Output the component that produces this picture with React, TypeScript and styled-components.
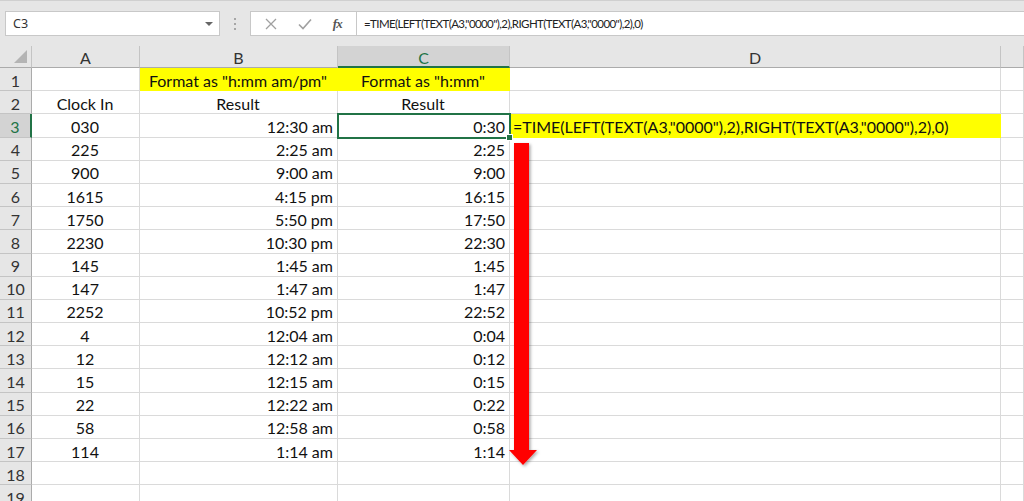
import React from 'react';
import styled, { createGlobalStyle, css } from 'styled-components';

const GlobalStyle = createGlobalStyle`
  html, body {
    margin: 0;
    padding: 0;
    background: #ffffff;
    overflow: hidden;
  }
  body {
    font-family: Lato, "Liberation Sans", sans-serif;
  }
`;

const GREEN = '#217346';
const GRID = '#dadada';
const HEAD_LINE = '#c4c4c4';

const Page = styled.div`
  width: 1024px;
  height: 501px;
  overflow: hidden;
  background: #ffffff;
`;

const TopBar = styled.div`
  height: 46px;
  box-sizing: border-box;
  padding-top: 10px;
  background: #e6e6e6;
  border-top: 1px solid #d0d0d0;
  display: flex;
  align-items: flex-start;
`;

const NameBox = styled.div`
  margin-left: 5px;
  width: 215px;
  height: 25px;
  box-sizing: border-box;
  background: #fff;
  border: 1px solid #c8c8c8;
  display: flex;
  align-items: center;
  justify-content: space-between;
  padding: 0 6px 0 7px;
  font-family: "Noto Sans", "Liberation Sans", sans-serif;
  font-size: 12.5px;
  color: #333;
`;

const Caret = styled.span`
  width: 0;
  height: 0;
  border-left: 4px solid transparent;
  border-right: 4px solid transparent;
  border-top: 4px solid #666;
`;

const Grip = styled.div`
  width: 30px;
  height: 25px;
  display: flex;
  flex-direction: column;
  align-items: center;
  justify-content: center;
  gap: 3px;

  span {
    width: 2px;
    height: 2px;
    background: #a6a6a6;
  }
`;

const ButtonBox = styled.div`
  width: 106px;
  height: 25px;
  box-sizing: border-box;
  background: #fff;
  border: 1px solid #c8c8c8;
  border-right: none;
  display: flex;
  align-items: center;
  justify-content: space-around;
  padding: 0 4px;
`;

const Fx = styled.span`
  font-family: "Liberation Serif", serif;
  font-style: italic;
  font-weight: bold;
  font-size: 13px;
  color: #555;
  letter-spacing: -1px;
`;

const FormulaInput = styled.div`
  flex: 1;
  height: 25px;
  box-sizing: border-box;
  background: #fff;
  border: 1px solid #c8c8c8;
  border-right: none;
  display: flex;
  align-items: center;
  padding-left: 7px;
  font-family: Lato, "Liberation Sans", sans-serif;
  font-size: 11.5px;
  letter-spacing: -0.6px;
  color: #222;
  white-space: nowrap;
`;

const SheetWrap = styled.div`
  position: relative;
`;

const Sheet = styled.div`
  display: grid;
  grid-template-columns: 32px 108px 198px 172px 491px 1fr;
  grid-template-rows: 22px;
  grid-auto-rows: 23.2px;
`;

type Align = 'left' | 'center' | 'right';

const HeadCell = styled.div<{ $active?: boolean }>`
  background: ${p => (p.$active ? '#d3d3d3' : '#e6e6e6')};
  color: ${p => (p.$active ? GREEN : '#333')};
  border-right: 1px solid ${HEAD_LINE};
  border-bottom: ${p => (p.$active ? `2px solid ${GREEN}` : `1px solid #ababab`)};
  box-sizing: border-box;
  display: flex;
  align-items: center;
  justify-content: center;
  font-size: 16px;
  padding-top: 2px;
`;

const Corner = styled.div`
  background: #e6e6e6;
  border-right: 1px solid ${HEAD_LINE};
  border-bottom: 1px solid #ababab;
  box-sizing: border-box;
  display: flex;
  align-items: flex-end;
  justify-content: flex-end;
  padding: 0 4px 4px 0;

  &::after {
    content: '';
    width: 0;
    height: 0;
    border-left: 13px solid transparent;
    border-bottom: 13px solid #b4b4b4;
  }
`;

const RowHead = styled.div<{ $active?: boolean }>`
  background: ${p => (p.$active ? '#d3d3d3' : '#e6e6e6')};
  color: ${p => (p.$active ? GREEN : '#333')};
  border-right: ${p => (p.$active ? `2px solid ${GREEN}` : `1px solid #ababab`)};
  border-bottom: 1px solid ${HEAD_LINE};
  box-sizing: border-box;
  display: flex;
  align-items: center;
  justify-content: center;
  font-size: 16px;
  padding-top: 2px;
`;

const Cell = styled.div<{ $align?: Align; $fill?: string; $selected?: boolean }>`
  position: relative;
  box-sizing: border-box;
  border-right: 1px solid ${p => p.$fill ?? GRID};
  border-bottom: 1px solid ${p => p.$fill ?? GRID};
  background: ${p => p.$fill ?? '#fff'};
  display: flex;
  align-items: center;
  justify-content: ${p => (p.$align === 'right' ? 'flex-end' : p.$align === 'center' ? 'center' : 'flex-start')};
  padding: 2px 4px 0 3px;
  font-size: 16px;
  color: #111;
  white-space: nowrap;
  overflow: visible;
  ${p =>
    p.$selected &&
    css`
      outline: 2px solid ${GREEN};
      outline-offset: -1px;
      z-index: 2;
    `}
`;

const Handle = styled.span`
  position: absolute;
  right: -4px;
  bottom: -4px;
  width: 5px;
  height: 5px;
  background: ${GREEN};
  border: 1px solid #fff;
`;

const Arrow = styled.svg`
  position: absolute;
  left: 505px;
  top: 97px;
  z-index: 3;
  overflow: visible;
`;

const rows: [string, string, string][] = [
  ['030', '12:30 am', '0:30'],
  ['225', '2:25 am', '2:25'],
  ['900', '9:00 am', '9:00'],
  ['1615', '4:15 pm', '16:15'],
  ['1750', '5:50 pm', '17:50'],
  ['2230', '10:30 pm', '22:30'],
  ['145', '1:45 am', '1:45'],
  ['147', '1:47 am', '1:47'],
  ['2252', '10:52 pm', '22:52'],
  ['4', '12:04 am', '0:04'],
  ['12', '12:12 am', '0:12'],
  ['15', '12:15 am', '0:15'],
  ['22', '12:22 am', '0:22'],
  ['58', '12:58 am', '0:58'],
  ['114', '1:14 am', '1:14'],
];

const YELLOW = '#ffff00';
const FORMULA = '=TIME(LEFT(TEXT(A3,"0000"),2),RIGHT(TEXT(A3,"0000"),2),0)';

const App = () => {
  return (
    <Page>
      <GlobalStyle />
      <TopBar>
        <NameBox>
          C3
          <Caret />
        </NameBox>
        <Grip>
          <span />
          <span />
          <span />
        </Grip>
        <ButtonBox>
          <svg width="12" height="12" viewBox="0 0 12 12">
            <path d="M1 1 L11 11 M11 1 L1 11" stroke="#a0a0a0" strokeWidth="1.3" fill="none" />
          </svg>
          <svg width="14" height="12" viewBox="0 0 14 12">
            <path d="M1 6.5 L5 10.5 L13 1.5" stroke="#a0a0a0" strokeWidth="1.6" fill="none" />
          </svg>
          <Fx>fx</Fx>
        </ButtonBox>
        <FormulaInput>{FORMULA}</FormulaInput>
      </TopBar>

      <SheetWrap>
        <Sheet>
          <Corner />
          <HeadCell>A</HeadCell>
          <HeadCell>B</HeadCell>
          <HeadCell $active>C</HeadCell>
          <HeadCell>D</HeadCell>
          <HeadCell />

          <RowHead>1</RowHead>
          <Cell />
          <Cell $align="center" $fill={YELLOW}>Format as "h:mm am/pm"</Cell>
          <Cell $align="center" $fill={YELLOW}>Format as "h:mm"</Cell>
          <Cell />
          <Cell />

          <RowHead>2</RowHead>
          <Cell $align="center">Clock In</Cell>
          <Cell $align="center">Result</Cell>
          <Cell $align="center">Result</Cell>
          <Cell />
          <Cell />

          {rows.map(([a, b, c], i) => (
            <React.Fragment key={i}>
              <RowHead $active={i === 0}>{i + 3}</RowHead>
              <Cell $align="center">{a}</Cell>
              <Cell $align="right">{b}</Cell>
              <Cell $align="right" $selected={i === 0}>
                {c}
                {i === 0 && <Handle />}
              </Cell>
              {i === 0 ? <Cell $fill={YELLOW}>{FORMULA}</Cell> : <Cell />}
              <Cell />
            </React.Fragment>
          ))}

          {[18, 19].map(n => (
            <React.Fragment key={n}>
              <RowHead>{n}</RowHead>
              <Cell />
              <Cell />
              <Cell />
              <Cell />
              <Cell />
            </React.Fragment>
          ))}
        </Sheet>

        <Arrow width="40" height="330" viewBox="0 0 40 330">
          <defs>
            <filter id="sh" x="-50%" y="-10%" width="200%" height="120%">
              <feDropShadow dx="1.5" dy="1.5" stdDeviation="1.5" floodColor="#000" floodOpacity="0.35" />
            </filter>
          </defs>
          <path
            d="M9 0 L24 0 L24 307 L32 307 L18 322 L4 307 L9 307 Z"
            fill="#ff0000"
            filter="url(#sh)"
          />
        </Arrow>
      </SheetWrap>
    </Page>
  );
};

export default App;
